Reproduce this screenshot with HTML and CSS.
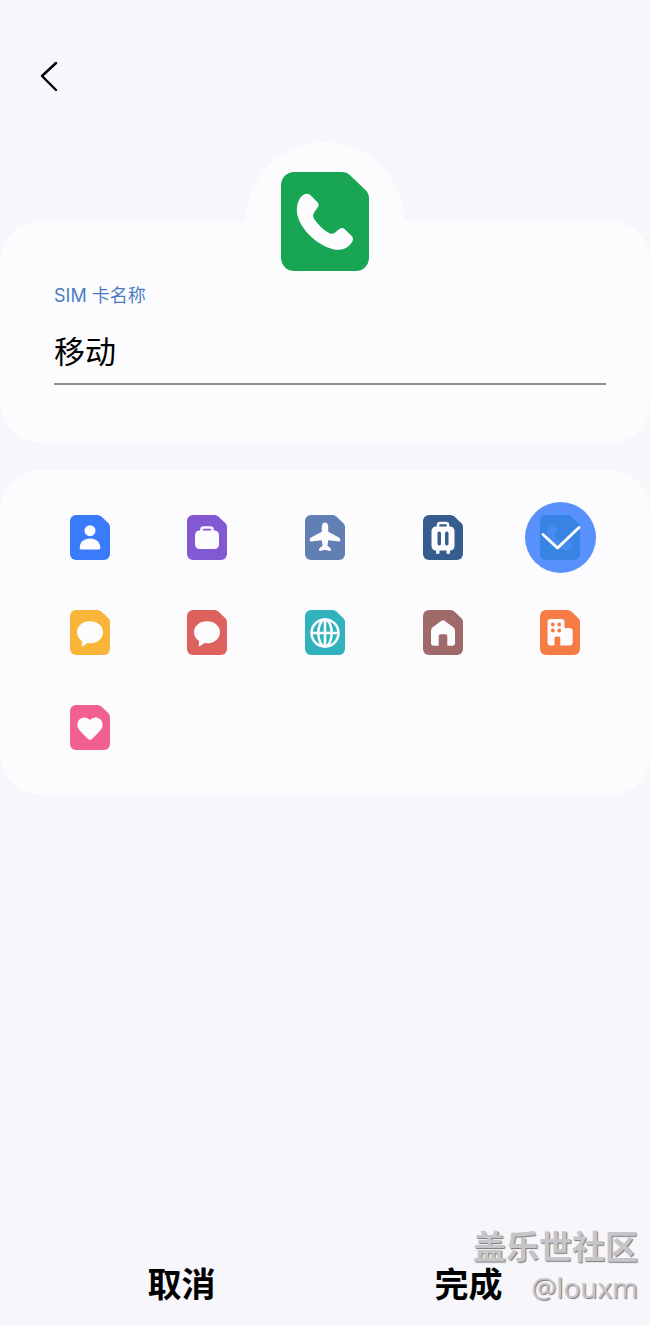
FILE: index.html
```html
<!DOCTYPE html>
<html lang="zh-CN">
<head>
    <meta charset="UTF-8">
    <meta name="viewport" content="width=device-width, initial-scale=1.0">
    <title>SIM 卡</title>
    <link rel="stylesheet" href="styles.css">
</head>
<body>
    <svg class="sprite" aria-hidden="true">
        <symbol id="card" viewBox="0 0 40 45">
            <path d="M6 0H27.5Q29.8 0 31.4 1.5L38.4 8.2Q40 9.8 40 12V39a6 6 0 0 1-6 6H6a6 6 0 0 1-6-6V6a6 6 0 0 1 6-6z"/>
        </symbol>
        <symbol id="phone" viewBox="0 0 40 45">
            <path d="M13.3 10.5L16.5 13.6Q17.6 14.8 16.6 16.2L15 18.4Q14.2 19.8 15 21.2C16.8 24 19.2 26.2 22 27.8Q23.3 28.4 24.5 27.6L26.4 26Q27.8 25 29 26L32 29Q33.4 30.4 32.2 32C30 35 27 35.8 24 35.2C15 33 7.3 24 7.2 17.5C7.2 14.5 8.2 11.5 10.4 10.2Q12 9.4 13.3 10.5z"/>
        </symbol>
        <symbol id="chat" viewBox="0 0 40 45">
            <path d="M20 11.3C27.5 11.3 33 16 33 22.2S27.5 33.3 20 33.3Q18.5 33.3 17.2 33.1Q15 35.4 12.3 36.3Q11.2 36.5 11.7 35.4Q12.3 33.5 11.9 31C9 29 7 26 7 22.2C7 16 12.5 11.3 20 11.3z"/>
        </symbol>
        <symbol id="tick" viewBox="0 0 71 71">
            <path d="M18 32.5L32.5 46L54 25.5" fill="none" stroke="#fff" stroke-width="3" stroke-linecap="round" stroke-linejoin="round"/>
        </symbol>
    </svg>

    <header class="top-bar">
        <button type="button" class="back" aria-label="返回">
            <svg width="48" height="48" viewBox="0 0 48 48"><path d="M32 11L18 24L32 38" fill="none" stroke="#000" stroke-width="2.4" stroke-linecap="round" stroke-linejoin="round"/></svg>
        </button>
    </header>

    <main>
        <section class="card name-card">
            <div class="preview">
                <svg class="preview-icon" viewBox="0 0 40 45">
                    <use href="#card" class="green"/>
                    <use href="#phone" class="glyph"/>
                </svg>
            </div>
            <div class="field">
                <label for="sim-name">SIM 卡名称</label>
                <input type="text" id="sim-name" value="移动">
            </div>
        </section>

        <section class="card icon-grid">
            <label class="option">
                <input type="radio" name="icon" aria-label="个人">
                <svg class="icon blue" viewBox="0 0 40 45">
                    <use href="#card"/>
                    <g class="glyph"><circle cx="20" cy="15.7" r="5.5"/><path d="M9.7 33C9.7 27 14 23.5 20 23.5S30.3 27 30.3 33Q30.3 34.5 29 34.5H11Q9.7 34.5 9.7 33z"/></g>
                </svg>
                <svg class="tick"><use href="#tick"/></svg>
            </label>
            <label class="option">
                <input type="radio" name="icon" aria-label="工作">
                <svg class="icon purple" viewBox="0 0 40 45">
                    <use href="#card"/>
                    <rect class="glyph" x="8" y="15.5" width="24" height="18.5" rx="4.5"/>
                    <path class="line" stroke-width="2.5" d="M14.5 17V14.5Q14.5 12.5 16.5 12.5H23.5Q25.5 12.5 25.5 14.5V17"/>
                </svg>
                <svg class="tick"><use href="#tick"/></svg>
            </label>
            <label class="option">
                <input type="radio" name="icon" aria-label="飞行">
                <svg class="icon steel" viewBox="0 0 40 45">
                    <use href="#card"/>
                    <path class="glyph" d="M20 7.5Q22.9 7.5 23.2 11.5V16.8L34 22.4Q35.5 23.3 35.3 25.2Q35.2 26.7 33.7 26.4L23.2 25.2L22.5 30.8L25.5 33.2Q26.8 35.6 25 35.9L20 34.8L15 35.9Q13.2 35.6 14.5 33.2L17.5 30.8L16.8 25.2L6.3 26.4Q4.8 26.7 4.7 25.2Q4.5 23.3 6 22.4L16.8 16.8V11.5Q17.1 7.5 20 7.5z"/>
                </svg>
                <svg class="tick"><use href="#tick"/></svg>
            </label>
            <label class="option">
                <input type="radio" name="icon" aria-label="旅行">
                <svg class="icon navy" viewBox="0 0 40 45">
                    <use href="#card"/>
                    <g class="glyph"><rect x="8.5" y="11.5" width="23" height="24" rx="4.5"/><rect x="13" y="33" width="3.5" height="6" rx="1.5"/><rect x="23.5" y="33" width="3.5" height="6" rx="1.5"/></g>
                    <path class="line" stroke-width="2.5" d="M15 13V10Q15 8 17 8H23Q25 8 25 10V13"/>
                    <rect x="14.5" y="16.5" width="3.5" height="14" rx="1.7"/>
                    <rect x="22" y="16.5" width="3.5" height="14" rx="1.7"/>
                </svg>
                <svg class="tick"><use href="#tick"/></svg>
            </label>
            <label class="option">
                <input type="radio" name="icon" aria-label="电话" checked>
                <svg class="icon green" viewBox="0 0 40 45">
                    <use href="#card"/>
                    <use href="#phone" class="glyph"/>
                </svg>
                <svg class="tick"><use href="#tick"/></svg>
            </label>
            <label class="option">
                <input type="radio" name="icon" aria-label="黄色信息">
                <svg class="icon yellow" viewBox="0 0 40 45">
                    <use href="#card"/>
                    <use href="#chat" class="glyph"/>
                </svg>
                <svg class="tick"><use href="#tick"/></svg>
            </label>
            <label class="option">
                <input type="radio" name="icon" aria-label="红色信息">
                <svg class="icon red" viewBox="0 0 40 45">
                    <use href="#card"/>
                    <use href="#chat" class="glyph"/>
                </svg>
                <svg class="tick"><use href="#tick"/></svg>
            </label>
            <label class="option">
                <input type="radio" name="icon" aria-label="网络">
                <svg class="icon teal" viewBox="0 0 40 45">
                    <use href="#card"/>
                    <g class="line" stroke-width="2.5"><circle cx="20" cy="23" r="13.5"/><ellipse cx="20" cy="23" rx="6.7" ry="13.5"/><path d="M6.5 23H33.5M20 9.5V36.5"/></g>
                </svg>
                <svg class="tick"><use href="#tick"/></svg>
            </label>
            <label class="option">
                <input type="radio" name="icon" aria-label="家庭">
                <svg class="icon brown" viewBox="0 0 40 45">
                    <use href="#card"/>
                    <path class="glyph" d="M18.5 10.7Q20 9.7 21.5 10.7L30.3 17.3Q32 18.7 32 20.5V33Q32 35.7 29.3 35.7H24.3V26Q24.3 24.3 22.6 24.3H17.4Q15.7 24.3 15.7 26V35.7H10.7Q8 35.7 8 33V20.5Q8 18.7 9.7 17.3z"/>
                </svg>
                <svg class="tick"><use href="#tick"/></svg>
            </label>
            <label class="option">
                <input type="radio" name="icon" aria-label="公司">
                <svg class="icon orange" viewBox="0 0 40 45">
                    <use href="#card"/>
                    <path class="glyph" d="M10.5 9H21.5Q24.500 9 24.500 12V18H29.5Q32.7 18 32.7 21.2V32.5Q32.7 35.5 29.5 35.5H20.3V28Q20.3 26.5 18.8 26.5H16Q14.5 26.5 14.5 28V35.5H10.5Q7.5 35.5 7.5 32.5V12Q7.5 9 10.5 9z"/>
                    <circle cx="12.8" cy="14.5" r="1.9"/><circle cx="19.2" cy="14.5" r="1.9"/>
                    <circle cx="12.8" cy="20.5" r="1.9"/><circle cx="19.2" cy="20.5" r="1.9"/>
                </svg>
                <svg class="tick"><use href="#tick"/></svg>
            </label>
            <label class="option">
                <input type="radio" name="icon" aria-label="爱心">
                <svg class="icon pink" viewBox="0 0 40 45">
                    <use href="#card"/>
                    <path class="glyph" d="M20 15C22.5 12 27 11.5 30 14S33.5 21.5 31 24.5Q27 29.5 21.7 34.2Q20 35.5 18.3 34.2Q13 29.5 9 24.5C6.5 21.5 7 16.5 10 14S17.5 12 20 15z"/>
                </svg>
                <svg class="tick"><use href="#tick"/></svg>
            </label>
        </section>
    </main>

    <footer class="actions">
        <button type="button">取消</button>
        <button type="button">完成</button>
        <div class="watermark">
            <div class="site">盖乐世社区</div>
            <div class="user">@louxm</div>
        </div>
    </footer>
</body>
</html>
```
FILE: styles.css
```css
* {
    box-sizing: border-box;
}
body {
    margin: 0;
    min-height: 100vh;
    display: flex;
    flex-direction: column;
    background: #f6f6fb;
    color: #000;
    font-family: Inter, "Noto Sans CJK SC", sans-serif;
}
button {
    border: none;
    padding: 0;
    background: none;
    color: inherit;
    font-family: inherit;
    cursor: pointer;
}
svg {
    display: block;
}
.sprite {
    position: absolute;
    width: 0;
    height: 0;
}
.top-bar {
    padding: 52px 24px 121px;
}
.back {
    display: block;
}
.card {
    background: #fcfcff;
    border-radius: 40px;
}

/* name */
.name-card {
    display: flow-root;
    margin-bottom: 27px;
}
.preview {
    display: flex;
    align-items: center;
    justify-content: center;
    width: 158px;
    height: 158px;
    /* half of the circle sticks out of the card */
    margin: -79px auto -16px;
    border-radius: 50%;
    background: #fcfcff;
}
.preview-icon {
    width: 88px;
    height: 99px;
}
.field {
    padding: 0 44px 58px 54px;
}
.field label {
    display: block;
    font-size: 18px;
    line-height: 24px;
    color: #4a7cc4;
}
.field input {
    display: block;
    width: 100%;
    height: 57px;
    margin-top: 20px;
    padding: 0 0 12px;
    border: none;
    border-bottom: 2px solid #8e8e92;
    border-radius: 0;
    outline: none;
    background: none;
    color: inherit;
    font-family: inherit;
    font-size: 31px;
}

/* icons */
.icon-grid {
    display: grid;
    grid-template-columns: repeat(5, 1fr);
    grid-auto-rows: 95px;
    padding: 20px 31px;
}
.option {
    display: grid;
    place-items: center;
    cursor: pointer;
}
.option > * {
    grid-area: 1 / 1;
}
.option input {
    margin: 0;
    opacity: 0;
}
.icon {
    width: 40px;
    height: 45px;
}
.glyph {
    fill: #fcfcff;
}
.line {
    fill: none;
    stroke: #fcfcff;
}
.tick {
    visibility: hidden;
    width: 71px;
    height: 71px;
    border-radius: 50%;
    background: rgba(60, 127, 252, 0.86);
}
.option input:checked ~ .icon .glyph {
    opacity: 0.5;
}
.option input:checked ~ .tick {
    visibility: visible;
}
.blue { fill: #3a7bfa; }
.purple { fill: #8359d3; }
.steel { fill: #627fb3; }
.navy { fill: #375d8e; }
.green { fill: #18a554; }
.yellow { fill: #f9b539; }
.red { fill: #dd615c; }
.teal { fill: #30b3bd; }
.brown { fill: #a06a6b; }
.orange { fill: #f77b45; }
.pink { fill: #f2608f; }

/* bottom buttons */
.actions {
    position: relative;
    display: grid;
    grid-template-columns: 1fr 1fr;
    margin-top: auto;
    padding: 0 38px 16px;
}
.actions button {
    font-size: 34px;
    font-weight: 700;
    line-height: 48px;
}
.watermark {
    position: absolute;
    right: 12px;
    bottom: 20px;
    text-align: right;
    color: #c6c6ca;
    text-shadow: 1px 1px 1px #77777b;
    pointer-events: none;
}
.site {
    font-size: 33px;
    font-weight: 700;
    line-height: 44px;
}
.user {
    font-family: "Open Sans", sans-serif;
    font-size: 28px;
    line-height: 36px;
}
```
